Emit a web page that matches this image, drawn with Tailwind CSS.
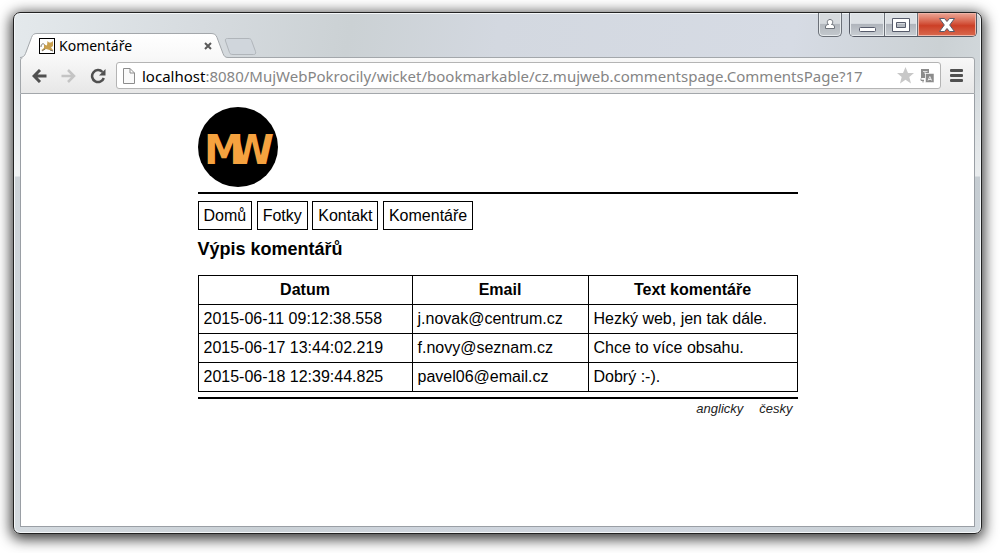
<!DOCTYPE html>
<html lang="cs">
<head>
  <meta charset="UTF-8" />
  <meta name="viewport" content="width=device-width, initial-scale=1.0"/>
  <title>Komentáře</title>
  <script src="https://cdn.jsdelivr.net/npm/@tailwindcss/browser@4"></script>
</head>
<body class="min-h-screen flex bg-white text-black pt-3 pb-[19px] pl-[13px] pr-[18px]">

  <!-- Browser window -->
  <div class="flex-1 min-w-0 flex flex-col px-[6px] pb-[6px] border border-[#222] rounded-[7px] bg-[linear-gradient(to_bottom,transparent_60px,rgba(255,255,255,0.5)_163px,rgba(180,188,196,0.45)_164px,rgba(200,208,216,0.4)),linear-gradient(100deg,#e4e9ec,#d6dbdf_18%,#cbd1d4_32%,#d3d8e0_46%,#d6dbe4_74%,#cbd1d4_88%,#dde3e7)] shadow-[inset_0_0_0_1px_#f4f7f9,0_3px_14px_2px_rgba(0,0,0,0.8)]">

    <!-- Title bar -->
    <div class="flex justify-between h-11">
      <div class="flex items-end min-w-0">
        <div class="relative z-10 flex items-center w-[208px] h-[25px] -mb-px pl-[19px] pr-4">
          <svg class="absolute left-0 top-0" width="208" height="25" viewBox="0 0 208 25" fill="none">
            <defs>
              <linearGradient id="tabFill" x1="0" y1="0" x2="0" y2="1">
                <stop offset="0" stop-color="#ffffff"/>
                <stop offset="1" stop-color="#f8f8f8"/>
              </linearGradient>
            </defs>
            <path d="M0 25V24.500C3 24.500 4.500 23 5.500 20.500L11.500 4.500C12.500 1.500 14 0.500 17 0.500H191C194 0.500 196 1.500 197 4.500L203 20.500C204 23 205 24.500 208 24.500V25Z" fill="url(#tabFill)"/>
            <path d="M0 24.500C3 24.500 4.500 23 5.500 20.500L11.500 4.500C12.500 1.500 14 0.500 17 0.500H191C194 0.500 196 1.500 197 4.500L203 20.500C204 23 205 24.500 208 24.500" stroke="#a3a7ab"/>
          </svg>
          <svg class="relative shrink-0" width="16" height="16" viewBox="0 0 16 16">
            <rect x="0.500" y="0.500" width="15" height="15" fill="#fff" stroke="#000"/>
            <path d="M5 6.500L8 7.500L8.500 3L10 4.500H12L14 3V8L12 9.500L14 12V13L10.500 12L7 11L3 13L2.500 12L5 10Z" fill="#c9a04e"/>
            <path d="M2 9C2 6 4 5 5.500 6.500M3 13L6 11M11 12L14 13" fill="none" stroke="#77746c"/>
          </svg>
          <span class="relative flex-1 ml-1 text-sm leading-5 font-['Noto_Sans','Open_Sans',sans-serif]">Komentáře</span>
          <button aria-label="Zavřít kartu" class="relative flex">
            <svg width="8" height="8" viewBox="0 0 8 8" stroke="#5a5a5a" stroke-width="2"><path d="M1 1L7 7M7 1L1 7"/></svg>
          </button>
        </div>
        <button aria-label="Nová karta" class="mb-[2px] -ml-1">
          <svg width="33" height="17" viewBox="0 0 33 17"><path d="M3.500 0.500H24C26 0.500 27 1 27.500 2.500L31.500 13.500C32 15.500 31.500 16.500 29.500 16.500H9C7 16.500 6 16 5.500 14.500L1.500 3C1 1.500 1.500 0.500 3.500 0.500Z" fill="#d0d6dc" stroke="#b0b5ba"/></svg>
        </button>
      </div>
      <div class="flex gap-[7px] h-6 -mr-[2px]">
        <button aria-label="Profil" class="flex justify-center w-6 pt-[6px] border border-t-0 border-[#6b7078] rounded-b-[5px] bg-linear-to-b from-[#d6dade] from-45% via-[#b3b8be] via-50% to-[#c3c8cd] shadow-[inset_0_0_0_1px_#e6eaed]">
          <svg class="shrink-0" width="12" height="11" viewBox="0 0 12 11" fill="#fff" stroke="#6b7078"><path d="M1.500 9.500V8C1.500 6.500 2.500 5.500 4.500 5.500C2.500 4 3 0.500 6 0.500S9.500 4 7.500 5.500C9.500 5.500 10.500 6.500 10.500 8V9.500Z"/></svg>
        </button>
        <div class="flex border border-t-0 border-[#565b66] rounded-b-[5px] overflow-hidden">
          <button aria-label="Minimalizovat" class="flex items-end justify-center w-[35px] pb-1 border-r border-[#6b7078] bg-linear-to-b from-[#dce0e4] from-45% via-[#b0b5bc] via-50% to-[#c9ced3] shadow-[inset_0_0_0_1px_#e6eaed]">
            <svg width="17" height="5" viewBox="0 0 17 5"><rect x="0.500" y="0.500" width="16" height="4" rx="1" fill="#fff" stroke="#565b6b"/></svg>
          </button>
          <button aria-label="Maximalizovat" class="flex items-center justify-center w-[33px] border-r border-[#6b7078] bg-linear-to-b from-[#dce0e4] from-45% via-[#b0b5bc] via-50% to-[#c9ced3] shadow-[inset_0_0_0_1px_#e6eaed]">
            <svg width="18" height="14" viewBox="0 0 18 14" stroke="#565b6b"><path d="M0.500 0.500H17.500V13.500H0.500ZM4.500 4.500V9.500H13.500V4.500Z" fill="#fff" fill-rule="evenodd"/></svg>
          </button>
          <button aria-label="Zavřít" class="flex items-center justify-center w-[58px] bg-linear-to-b from-[#eba797] via-[#cc3f26] via-55% to-[#d9694e] shadow-[inset_0_0_0_1px_#efb5a8]">
            <svg width="16" height="14" viewBox="0 0 16 14"><path d="M0.500 0.500H5.500L8 3.500L10.500 0.500H15.500L10.700 7L15.500 13.500H10.500L8 10.500L5.500 13.500H0.500L5.300 7Z" fill="#fff" stroke="#565b6b"/></svg>
          </button>
        </div>
      </div>
    </div>

    <!-- Toolbar -->
    <div class="flex items-center h-[37px] px-[11px] border border-[#a3a7ab] rounded-t-[3px] bg-linear-to-b from-[#f8f8f8] to-[#e7e7e7]">
      <button aria-label="Zpět" class="mr-[14px]">
        <svg width="15" height="14" viewBox="0 0 15 14" fill="none" stroke="#505050" stroke-width="3"><path d="M14.500 7H3M8 1L2 7L8 13"/></svg>
      </button>
      <button aria-label="Vpřed" class="mr-[14px]">
        <svg width="15" height="14" viewBox="0 0 15 14" fill="none" stroke="#c4c4c4" stroke-width="2.500"><path d="M0.500 7H12M7 1L13 7L7 13"/></svg>
      </button>
      <button aria-label="Obnovit" class="mr-[10px]">
        <svg width="16" height="16" viewBox="0 0 16 16" fill="none"><path d="M12.500 4A6 6 0 1 0 13.800 10" stroke="#505050" stroke-width="2.500"/><path d="M15.500 1V7.500H9Z" fill="#505050"/></svg>
      </button>
      <div class="flex-1 min-w-0 flex items-center h-[27px] px-[6px] bg-white border border-[#b4b4b4] rounded-[3px]">
        <svg class="shrink-0" width="12" height="16" viewBox="0 0 12 16" fill="#fafafa" stroke="#8c8c8c"><path d="M0.500 0.500H7L11.500 5V15.500H0.500ZM7 0.500V5H11.500"/></svg>
        <div class="flex-1 min-w-0 overflow-hidden whitespace-nowrap ml-[7px] text-[15px] leading-5 text-[#858585] font-['Noto_Sans','Open_Sans',sans-serif]"><span class="text-black">localhost</span>:8080/MujWebPokrocily/wicket/bookmarkable/cz.mujweb.commentspage.CommentsPage?17</div>
        <button aria-label="Přidat do záložek" class="mr-[6px]">
          <svg width="17" height="17" viewBox="0 0 17 17" fill="#c8c8c8"><path d="M8.500 0L11 6H17L12.300 10L14 16.500L8.500 12.800L3 16.500L4.700 10L0 6H6Z"/></svg>
        </button>
        <button aria-label="Přeložit">
          <svg width="14" height="14" viewBox="0 0 14 14"><path d="M1 0H9V4H5V9H1Z" fill="#8c8c8c"/><path d="M3 2.500H7.500M5 3V5" stroke="#ddd"/><rect x="5.500" y="4.500" width="8.500" height="9" fill="#8c8c8c" stroke="#fff" stroke-width="0.500"/><path d="M8 11.500L9.800 7.500L11.600 11.500M8.500 10.500H11" fill="none" stroke="#eee"/><path d="M1 9.500V11.500H4M3 10.500V13.500" fill="none" stroke="#8c8c8c"/></svg>
        </button>
      </div>
      <button aria-label="Nabídka" class="ml-[9px]">
        <svg width="13" height="13" viewBox="0 0 13 13" fill="#505050"><rect width="13" height="3" rx="1"/><rect y="5" width="13" height="3" rx="1"/><rect y="10" width="13" height="3" rx="1"/></svg>
      </button>
    </div>

    <!-- Page -->
    <div class="flex-1 bg-white border border-t-0 border-[#9a9fa5] px-4 pt-[13px] font-['Liberation_Sans',Arial,sans-serif] text-base leading-[19px]">
      <div class="w-[600px] max-w-full mx-auto">
        <header class="pb-[5px] border-b-2 border-black">
          <svg width="80" height="80" viewBox="0 0 80 80" class="block">
            <circle cx="40" cy="40" r="40"/>
            <text x="6 32" y="57" font-size="40" class="font-['DejaVu_Sans',sans-serif] font-bold" fill="#f5a23f">MW</text>
          </svg>
        </header>
        <nav class="pt-[7px]">
          <a href="#" class="inline-block px-[5px] py-1 border border-black">Domů</a>
          <a href="#" class="inline-block px-[5px] py-1 border border-black">Fotky</a>
          <a href="#" class="inline-block px-[5px] py-1 border border-black">Kontakt</a>
          <a href="#" class="inline-block px-[5px] py-1 border border-black">Komentáře</a>
        </nav>
        <h1 class="mt-[9px] mb-[15px] text-lg leading-[21px] font-bold">Výpis komentářů</h1>
        <table class="w-full border-collapse leading-[18px]">
          <thead>
            <tr>
              <th class="w-[214px] p-[5px] border border-black">Datum</th>
              <th class="w-[176px] p-[5px] border border-black">Email</th>
              <th class="p-[5px] border border-black">Text komentáře</th>
            </tr>
          </thead>
          <tbody>
            <tr>
              <td class="p-[5px] border border-black">2015-06-11 09:12:38.558</td>
              <td class="p-[5px] border border-black">j.novak@centrum.cz</td>
              <td class="p-[5px] border border-black">Hezký web, jen tak dále.</td>
            </tr>
            <tr>
              <td class="p-[5px] border border-black">2015-06-17 13:44:02.219</td>
              <td class="p-[5px] border border-black">f.novy@seznam.cz</td>
              <td class="p-[5px] border border-black">Chce to více obsahu.</td>
            </tr>
            <tr>
              <td class="p-[5px] border border-black">2015-06-18 12:39:44.825</td>
              <td class="p-[5px] border border-black">pavel06@email.cz</td>
              <td class="p-[5px] border border-black">Dobrý :-).</td>
            </tr>
          </tbody>
        </table>
        <footer class="mt-[5px] border-t-2 border-black flex justify-end gap-4 pr-[5px] text-[13px] italic text-[#222]">
          <a href="#">anglicky</a>
          <a href="#">česky</a>
        </footer>
      </div>
    </div>
  </div>

</body>
</html>
